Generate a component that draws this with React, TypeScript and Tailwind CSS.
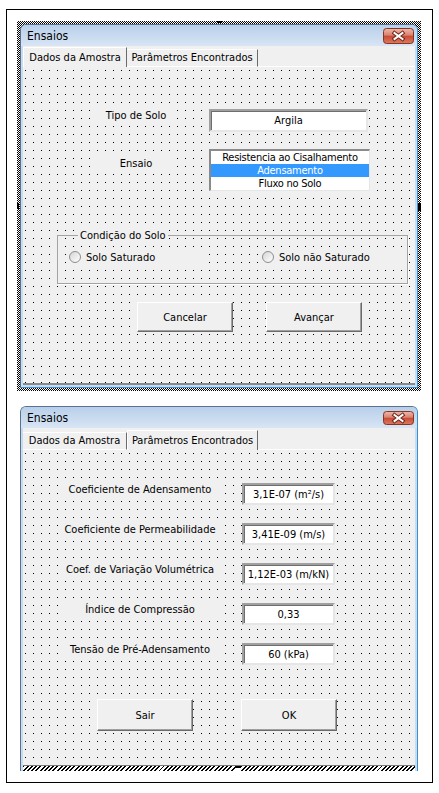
import React from 'react';

const FONT = "font-['DejaVu_Sans_Condensed','Liberation_Sans',sans-serif]";
const DOTS =
  'bg-[#f0f0f0] bg-[radial-gradient(circle_at_2.5px_3.5px,#000_0.75px,transparent_0.75px)] bg-[length:8px_8px]';

function CloseButton({ id, h }: { id: string; h: number }) {
  const cy = h / 2;
  return (
    <svg width="31" height={h} viewBox={`0 0 31 ${h}`}>
      <defs>
        <linearGradient id={id} x1="0" y1="0" x2="0" y2="1">
          <stop offset="0" stopColor="#edb9ad" />
          <stop offset="0.45" stopColor="#da826f" />
          <stop offset="0.5" stopColor="#c84a33" />
          <stop offset="1" stopColor="#dc7a62" />
        </linearGradient>
      </defs>
      <rect x="0.5" y="0.5" width="30" height={h - 1} rx="3" fill={`url(#${id})`} stroke="#86351f" />
      <path
        d={`M11.5 ${cy - 3} L19.5 ${cy + 3} M19.5 ${cy - 3} L11.5 ${cy + 3}`}
        stroke="#6e2518"
        strokeWidth="4"
        strokeLinecap="square"
      />
      <path
        d={`M11.5 ${cy - 3} L19.5 ${cy + 3} M19.5 ${cy - 3} L11.5 ${cy + 3}`}
        stroke="#ffffff"
        strokeWidth="2"
        strokeLinecap="square"
      />
    </svg>
  );
}

function Tabs({ active, tall }: { active: number; tall?: boolean }) {
  const names = ['Dados da Amostra', 'Parâmetros Encontrados'];
  const widths = ['w-[104px]', 'w-[131px]'];
  return (
    <div className={`flex items-end ${tall ? 'h-[22px]' : 'h-[21px]'}`}>
      {names.map((name, i) =>
        i === active ? (
          <div
            key={name}
            className={`${widths[i]} flex h-[20px] justify-center border-t border-l border-white border-r border-r-[#6b6b6b] pt-[3px] leading-[13px]`}
          >
            {name}
          </div>
        ) : (
          <div
            key={name}
            className={`${widths[i]} flex h-[18px] justify-center border-t border-white border-b border-r border-r-[#6b6b6b] pt-[1px] leading-[13px]`}
          >
            {name}
          </div>
        )
      )}
      <div className="flex-1 self-stretch border-b border-white" />
    </div>
  );
}

function TextBox({ w, h, children }: { w: string; h: string; children: React.ReactNode }) {
  return (
    <div
      className={`${w} ${h} flex items-center justify-center border-2 border-t-[#a0a0a0] border-l-[#a0a0a0] border-r-[#e6e6e6] border-b-[#e6e6e6] bg-white shadow-[inset_1px_1px_0_#6e6e6e] leading-[13px]`}
    >
      {children}
    </div>
  );
}

function Button({ h, children }: { h: string; children: React.ReactNode }) {
  return (
    <div
      className={`w-[96px] ${h} flex items-center justify-center border border-t-white border-l-white border-r-[#6b6b6b] border-b-[#6b6b6b] bg-[#f0f0f0] shadow-[inset_-1px_-1px_0_#a0a0a0] leading-[13px]`}
    >
      {children}
    </div>
  );
}

function Radio({ label, w }: { label: string; w: string }) {
  return (
    <div className={`${w} flex h-[20px] items-center gap-[5px] bg-[#f0f0f0] pl-[2px]`}>
      <div className="h-[12px] w-[12px] rounded-full border border-[#8d8d8d] bg-linear-to-br from-[#d6d6d6] to-white" />
      <span className="leading-[13px]">{label}</span>
    </div>
  );
}

function Window({
  active,
  closeId,
  closeH,
  cut,
  children,
}: {
  active: number;
  closeId: string;
  closeH: number;
  cut?: boolean;
  children: React.ReactNode;
}) {
  return (
    <div
      className={`flex w-[398px] flex-col rounded-t-[6px] border border-[#5a7290] border-r-[#3790d4] bg-[#c7dbf1] ${
        cut ? 'border-b-0' : 'border-b-[#3790d4] pb-[2px]'
      }`}
    >
      <div className="flex h-[21px] items-center justify-between rounded-t-[5px] bg-linear-to-b from-[#b8cfea] to-[#d8e5f4] pl-[6px] pr-[3px]">
        <span className="text-[12px] leading-[14px] text-black">Ensaios</span>
        <CloseButton id={closeId} h={closeH} />
      </div>
      <div className="mx-[2px] flex flex-col bg-[#f0f0f0]">
        <Tabs active={active} tall={cut} />
        {children}
      </div>
    </div>
  );
}

function SamplePanel() {
  return (
    <div className={`${DOTS} flex h-[318px] flex-col border-b-2 border-b-[#8a8a8a] pt-[42px]`}>
      <div className="flex items-start pl-[73px]">
        <div className="-mt-[2px] flex h-[18px] w-[80px] items-center justify-center bg-[#f0f0f0]">Tipo de Solo</div>
        <div className="ml-[33px]">
          <TextBox w="w-[159px]" h="h-[23px]">
            Argila
          </TextBox>
        </div>
      </div>
      <div className="mt-[17px] flex items-start pl-[73px]">
        <div className="mt-[6px] flex h-[18px] w-[80px] items-center justify-center bg-[#f0f0f0]">Ensaio</div>
        <div className="ml-[33px] flex h-[42px] w-[161px] flex-col border-t-2 border-l-2 border-t-[#8a8a8a] border-l-[#8a8a8a] border-r border-b border-r-[#e6e6e6] border-b-[#e6e6e6] bg-white text-center tracking-[-0.25px]">
          <div className="h-[13px] leading-[13px]">Resistencia ao Cisalhamento</div>
          <div className="h-[13px] bg-[#3399ff] leading-[13px] text-white">Adensamento</div>
          <div className="h-[13px] leading-[13px]">Fluxo no Solo</div>
        </div>
      </div>
      <fieldset className="mt-[38px] ml-[34px] w-[351px] border border-[#a3a3a3] pb-[16px] pl-[9px] shadow-[1px_1px_0_#fff]">
        <legend className="ml-[11px] bg-[#f0f0f0] px-[2px] leading-[13px]">Condição do Solo</legend>
        <div className="mt-[5px] flex items-center">
          <Radio label="Solo Saturado" w="w-[140px]" />
          <div className="ml-[53px]">
            <Radio label="Solo não Saturado" w="w-[145px]" />
          </div>
        </div>
      </fieldset>
      <div className="mt-[18px] flex gap-[33px] pl-[114px]">
        <Button h="h-[30px]">Cancelar</Button>
        <Button h="h-[30px]">Avançar</Button>
      </div>
    </div>
  );
}

const results = [
  { label: 'Coeficiente de Adensamento', value: '3,1E-07 (m²/s)' },
  { label: 'Coeficiente de Permeabilidade', value: '3,41E-09 (m/s)' },
  { label: 'Coef. de Variação Volumétrica', value: '1,12E-03 (m/kN)' },
  { label: 'Índice de Compressão', value: '0,33' },
  { label: 'Tensão de Pré-Adensamento', value: '60 (kPa)' },
];

function ResultsPanel() {
  return (
    <>
      <div className={`${DOTS} flex h-[316px] flex-col border-b border-b-[#7a7a7a] pt-[33px]`}>
        <div className="flex flex-col gap-[18px]">
          {results.map((r) => (
            <div key={r.label} className="flex items-start pl-[39px]">
              <div className="-mt-[2px] flex h-[18px] w-[156px] items-center justify-center bg-[#f0f0f0]">
                {r.label}
              </div>
              <div className="ml-[24px]">
                <TextBox w="w-[93px]" h="h-[22px]">
                  {r.value}
                </TextBox>
              </div>
            </div>
          ))}
        </div>
        <div className="mt-[34px] flex gap-[48px] pl-[74px]">
          <Button h="h-[32px]">Sair</Button>
          <Button h="h-[32px]">OK</Button>
        </div>
      </div>
      <div className="flex h-[5px]">
        <div className="w-[212px] bg-[repeating-linear-gradient(135deg,#000_0_1.4px,#fff_1.4px_3px)]" />
        <div className="w-[6px] border-t-2 border-black bg-white" />
        <div className="flex-1 bg-[repeating-linear-gradient(135deg,#000_0_1.4px,#fff_1.4px_3px)]" />
      </div>
    </>
  );
}

export default function App() {
  return (
    <div className={`${FONT} h-[793px] w-[439px] bg-white pt-[9px] pl-[6px] text-[11px] text-black`}>
      <div className="flex h-[774px] w-[427px] flex-col border border-black">
        <div className="relative mt-[11px] ml-[10px] w-[404px] bg-[repeating-conic-gradient(#000_0_25%,#fff_0_50%)] bg-[length:2px_2px] p-[3px]">
          <div className="absolute top-0 left-[200px] h-[2px] w-[5px] bg-black" />
          <div className="absolute top-[182px] left-0 h-[6px] w-[2px] bg-black" />
          <div className="absolute top-[182px] right-0 h-[8px] w-[3px] bg-black" />
          <Window active={0} closeId="close-a" closeH={16}>
            <SamplePanel />
          </Window>
        </div>
        <div className="mt-[15px] ml-[13px]">
          <Window active={1} closeId="close-b" closeH={14} cut>
            <ResultsPanel />
          </Window>
        </div>
      </div>
    </div>
  );
}
